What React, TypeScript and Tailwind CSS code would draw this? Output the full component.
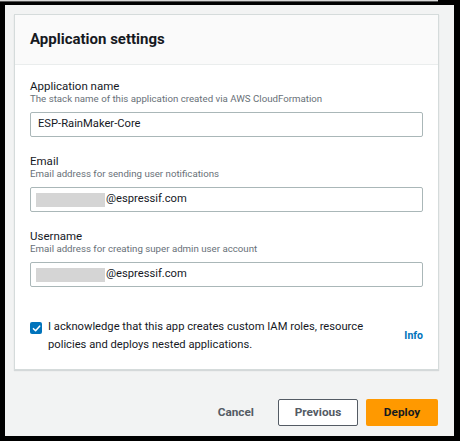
import React from "react";

const font = { fontFamily: "Roboto, 'Noto Sans', sans-serif" };

function Field({ label, desc, children }: { label: string; desc: string; children: React.ReactNode }) {
  return (
    <div className="flex flex-col">
      <div className="text-[11.5px] leading-[17px] text-[#16191f]">{label}</div>
      <div className="-mt-[3px] text-[9.7px] leading-[14px] text-[#687078]">{desc}</div>
      <div className="mt-[6px] h-[25px] border border-[#aab7b8] rounded-[2px] bg-white flex items-center px-[7px] text-[11.2px] text-[#16191f]">
        {children}
      </div>
    </div>
  );
}

function Redacted() {
  return (
    <>
      <span className="inline-block w-[69px] h-[14px] bg-[#d5d5d5] -ml-[2px] mr-[1px]" />
      <span>@espressif.com</span>
    </>
  );
}

export default function App() {
  return (
    <div className="w-[460px] h-[441px] bg-[#000000] flex flex-col overflow-hidden" style={font}>
      <div className="h-[5px] shrink-0 flex flex-col">
        <div className="h-[1px] w-[438px] bg-[#d8d8d8]" />
        <div className="h-[1px] w-[438px] bg-[#555555]" />
      </div>
      <div className="h-[431px] ml-[5px] mr-[6px] bg-[#f2f3f3] flex flex-col">
        <div className="mt-[9px] ml-[9px] mr-[15px] border border-[#d5dbdb] bg-white shadow-[0_1px_1px_rgba(0,28,36,0.12)]">
          <div className="h-[50px] bg-[#fafafa] border-b border-[#eaeded] flex items-center px-[15px]">
            <span className="text-[15px] font-bold text-[#16191f]">Application settings</span>
          </div>
          <div className="px-[15px] pt-[13px] pb-[15px] flex flex-col gap-[16px]">
            <Field label="Application name" desc="The stack name of this application created via AWS CloudFormation">
              ESP-RainMaker-Core
            </Field>
            <Field label="Email" desc="Email address for sending user notifications">
              <Redacted />
            </Field>
            <Field label="Username" desc="Email address for creating super admin user account">
              <Redacted />
            </Field>
            <div className="mt-[15px] flex items-start">
              <div className="mt-[4px] w-[12px] h-[12px] rounded-[2px] bg-[#0073bb] flex items-center justify-center shrink-0">
                <svg width="9" height="9" viewBox="0 0 10 10" fill="none">
                  <path d="M1.6 5.2 L4 7.5 L8.5 2.4" stroke="white" strokeWidth="1.7" strokeLinecap="round" strokeLinejoin="round" />
                </svg>
              </div>
              <div className="ml-[6px] flex-1 text-[11.2px] leading-[18px] text-[#16191f]">
                I acknowledge that this app creates custom IAM roles, resource
                <br />
                policies and deploys nested applications.
              </div>
              <div className="self-center text-[10.5px] font-bold text-[#0073bb]">Info</div>
            </div>
          </div>
        </div>
        <div className="mt-[29px] mr-[16px] flex justify-end items-center gap-[8px]">
          <span className="mr-[16px] text-[11.8px] font-bold text-[#545b64]">Cancel</span>
          <div className="w-[80px] h-[27px] border border-[#545b64] rounded-[2px] bg-white flex items-center justify-center text-[11.8px] font-bold text-[#545b64]">
            Previous
          </div>
          <div className="w-[72px] h-[27px] rounded-[2px] bg-[#ff9900] flex items-center justify-center text-[11.8px] font-bold text-[#16191f]">
            Deploy
          </div>
        </div>
      </div>
    </div>
  );
}
